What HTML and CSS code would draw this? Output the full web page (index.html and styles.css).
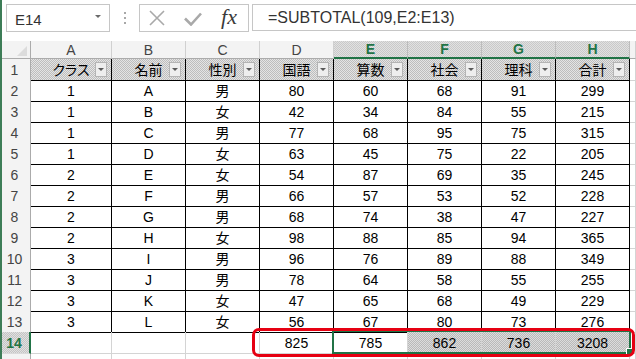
FILE: index.html
```html
<!DOCTYPE html>
<html lang="ja">
<head>
<meta charset="utf-8">
<title>SUBTOTAL</title>
<link rel="stylesheet" href="styles.css">
</head>
<body>
<div class="app">
  <div class="fbar">
    <div class="namebox"><span class="nb-text">E14</span><span class="nb-arrow"></span></div>
    <div class="sep"><i></i><i></i><i></i></div>
    <div class="btns">
      <span class="btn b-x"><svg width="16" height="16" viewBox="0 0 16 16"><path d="M1 1L15 15M15 1L1 15" stroke="#a9a9a9" stroke-width="1.6" fill="none"/></svg></span>
      <span class="btn b-ok"><svg width="18" height="14" viewBox="0 0 18 14"><path d="M1 6.5L7 12.5L17 1.5" stroke="#a9a9a9" stroke-width="2.6" fill="none"/></svg></span>
      <span class="btn b-fx">fx</span>
    </div>
    <div class="formula">=SUBTOTAL(109,E2:E13)</div>
  </div>

  <div class="sheet">
    <div class="row hdr">
      <div class="c corner"><svg width="10" height="10" viewBox="0 0 10 10"><path d="M10 0L10 10L0 10Z" fill="#dcdcdc"/></svg></div>
      <div class="c">A</div><div class="c">B</div><div class="c">C</div><div class="c">D</div>
      <div class="c sel">E</div><div class="c sel">F</div><div class="c sel">G</div><div class="c sel">H</div>
      <div class="c"></div>
    </div>

    <div class="row r1">
      <div class="c rh">1</div>
      <div class="c t f">クラス<span class="fb"></span></div>
      <div class="c t f">名前<span class="fb"></span></div>
      <div class="c t f">性別<span class="fb"></span></div>
      <div class="c t f">国語<span class="fb"></span></div>
      <div class="c t f">算数<span class="fb"></span></div>
      <div class="c t f">社会<span class="fb"></span></div>
      <div class="c t f">理科<span class="fb"></span></div>
      <div class="c t f">合計<span class="fb"></span></div>
      <div class="c"></div>
    </div>

    <div class="row"><div class="c rh">2</div><div class="c t">1</div><div class="c t">A</div><div class="c t">男</div><div class="c t">80</div><div class="c t">60</div><div class="c t">68</div><div class="c t">91</div><div class="c t">299</div><div class="c"></div></div>
    <div class="row"><div class="c rh">3</div><div class="c t">1</div><div class="c t">B</div><div class="c t">女</div><div class="c t">42</div><div class="c t">34</div><div class="c t">84</div><div class="c t">55</div><div class="c t">215</div><div class="c"></div></div>
    <div class="row"><div class="c rh">4</div><div class="c t">1</div><div class="c t">C</div><div class="c t">男</div><div class="c t">77</div><div class="c t">68</div><div class="c t">95</div><div class="c t">75</div><div class="c t">315</div><div class="c"></div></div>
    <div class="row"><div class="c rh">5</div><div class="c t">1</div><div class="c t">D</div><div class="c t">女</div><div class="c t">63</div><div class="c t">45</div><div class="c t">75</div><div class="c t">22</div><div class="c t">205</div><div class="c"></div></div>
    <div class="row"><div class="c rh">6</div><div class="c t">2</div><div class="c t">E</div><div class="c t">女</div><div class="c t">54</div><div class="c t">87</div><div class="c t">69</div><div class="c t">35</div><div class="c t">245</div><div class="c"></div></div>
    <div class="row"><div class="c rh">7</div><div class="c t">2</div><div class="c t">F</div><div class="c t">男</div><div class="c t">66</div><div class="c t">57</div><div class="c t">53</div><div class="c t">52</div><div class="c t">228</div><div class="c"></div></div>
    <div class="row"><div class="c rh">8</div><div class="c t">2</div><div class="c t">G</div><div class="c t">男</div><div class="c t">68</div><div class="c t">74</div><div class="c t">38</div><div class="c t">47</div><div class="c t">227</div><div class="c"></div></div>
    <div class="row"><div class="c rh">9</div><div class="c t">2</div><div class="c t">H</div><div class="c t">女</div><div class="c t">98</div><div class="c t">88</div><div class="c t">85</div><div class="c t">94</div><div class="c t">365</div><div class="c"></div></div>
    <div class="row"><div class="c rh">10</div><div class="c t">3</div><div class="c t">I</div><div class="c t">男</div><div class="c t">96</div><div class="c t">76</div><div class="c t">89</div><div class="c t">88</div><div class="c t">349</div><div class="c"></div></div>
    <div class="row"><div class="c rh">11</div><div class="c t">3</div><div class="c t">J</div><div class="c t">男</div><div class="c t">78</div><div class="c t">64</div><div class="c t">58</div><div class="c t">55</div><div class="c t">255</div><div class="c"></div></div>
    <div class="row"><div class="c rh">12</div><div class="c t">3</div><div class="c t">K</div><div class="c t">女</div><div class="c t">47</div><div class="c t">65</div><div class="c t">68</div><div class="c t">49</div><div class="c t">229</div><div class="c"></div></div>
    <div class="row"><div class="c rh">13</div><div class="c t">3</div><div class="c t">L</div><div class="c t">女</div><div class="c t">56</div><div class="c t">67</div><div class="c t">80</div><div class="c t">73</div><div class="c t">276</div><div class="c"></div></div>

    <div class="row r14">
      <div class="c rh on">14</div>
      <div class="c"></div><div class="c"></div><div class="c"></div>
      <div class="c">825</div>
      <div class="c">785</div>
      <div class="c hl">862</div>
      <div class="c hl">736</div>
      <div class="c hl">3208</div>
      <div class="c"></div>
      <div class="selbox"></div>
      <div class="handle"></div>
      <div class="mark"></div>
    </div>

    <div class="row"><div class="c rh"></div><div class="c"></div><div class="c"></div><div class="c"></div><div class="c"></div><div class="c"></div><div class="c"></div><div class="c"></div><div class="c"></div><div class="c"></div></div>
  </div>
</div>
</body>
</html>
```

FILE: styles.css
```css
html, body {
  margin: 0;
  padding: 0;
  background: #ffffff;
}
body {
  width: 636px;
  height: 359px;
  overflow: hidden;
  font-family: "Liberation Sans", "Noto Sans CJK JP", sans-serif;
  font-size: 14px;
  color: #000;
}
.app {
  height: 359px;
  border-left: 2px solid #3d7d57;
  overflow: hidden;
}

/* formula bar */
.fbar {
  height: 41px;
  box-sizing: border-box;
  padding: 4px 0 0 4px;
  display: flex;
  align-items: flex-start;
  background: #fff;
}
.namebox {
  width: 104px;
  height: 28px;
  box-sizing: border-box;
  border: 1px solid #c6c6c6;
  display: flex;
  align-items: center;
  justify-content: space-between;
  padding: 3px 8px 0 8px;
  color: #333;
  font-size: 15px;
}
.nb-arrow {
  width: 0;
  height: 0;
  border-left: 3px solid transparent;
  border-right: 3px solid transparent;
  border-top: 3px solid #6a6a6a;
  margin-top: -6px;
}
.sep {
  width: 29px;
  height: 28px;
  display: flex;
  flex-direction: column;
  align-items: center;
  justify-content: center;
  gap: 3px;
  padding-left: 1px;
  box-sizing: border-box;
}
.sep i {
  display: block;
  width: 2px;
  height: 2px;
  background: #a8a8a8;
}
.btns {
  width: 110px;
  height: 28px;
  box-sizing: border-box;
  border: 1px solid #c6c6c6;
  display: flex;
  align-items: center;
}
.btn {
  display: flex;
  align-items: center;
  justify-content: center;
  height: 26px;
}
.b-x { width: 34px; }
.b-ok { width: 38px; padding-top: 1px; }
.b-fx {
  width: 34px;
  font-family: "Liberation Serif", serif;
  font-style: italic;
  font-size: 22px;
  color: #3a3a3a;
  padding-bottom: 2px;
  box-sizing: border-box;
}
.formula {
  flex: 1;
  height: 27px;
  margin-left: 3px;
  box-sizing: border-box;
  border: 1px solid #c6c6c6;
  border-right: none;
  display: flex;
  align-items: center;
  padding-left: 15px;
  font-size: 16px;
  color: #333;
}

/* sheet */
.row {
  display: grid;
  grid-template-columns: 29px 81px repeat(7, 74px) 1fr;
  height: 21px;
}
.c {
  box-sizing: border-box;
  border-right: 1px solid #d4d4d4;
  border-bottom: 1px solid #d4d4d4;
  display: flex;
  align-items: center;
  justify-content: center;
  line-height: 19px;
  padding-top: 2px;
  white-space: nowrap;
}
.hdr {
  height: 18px;
}
.hdr .c {
  background: #f3f3f3;
  border-bottom-color: #ababab;
  border-right-color: #d0d0d0;
  color: #444;
  line-height: 16px;
  padding-top: 0;
}
.hdr .corner {
  border-right-color: #ababab;
  justify-content: flex-end;
  align-items: flex-end;
  padding: 0 3px 2px 0;
}
.hdr .sel {
  background: repeating-conic-gradient(#c9c9c9 0 25%, #e1e1e1 0 50%) 0 0 / 2px 2px;
  border-bottom: 2px solid #217346;
  border-right-color: #bdbdbd;
  color: #217346;
  font-weight: bold;
}
.rh {
  background: #f3f3f3;
  border-right-color: #ababab;
  border-bottom-color: #dadada;
  color: #444;
  padding-right: 3px;
}
.rh.on {
  background: repeating-conic-gradient(#c4c4c4 0 25%, #e0e0e0 0 50%) 0 0 / 2px 2px;
  border-right: 2px solid #217346;
  color: #217346;
  font-weight: bold;
}
.t {
  border-right-color: #000;
  border-bottom-color: #000;
}
.r1 .f {
  position: relative;
  background: repeating-conic-gradient(#bdbdbd 0 25%, #e4e4e4 0 50%) 0 0 / 2px 2px;
  font-feature-settings: "palt";
}
.fb {
  position: absolute;
  right: 4px;
  top: 3px;
  width: 12px;
  height: 15px;
  box-sizing: border-box;
  border: 1px solid #b4b4b4;
  background: #eeeeee;
  display: flex;
  align-items: center;
  justify-content: center;
}
.fb::after {
  content: "";
  width: 0;
  height: 0;
  border-left: 3px solid transparent;
  border-right: 3px solid transparent;
  border-top: 3px solid #5a5a5a;
}
.r14 {
  position: relative;
}
.r14 .hl {
  background: repeating-conic-gradient(#b9b9b9 0 25%, #dcdcdc 0 50%) 0 0 / 2px 2px;
}
.selbox {
  position: absolute;
  left: 330px;
  top: -2px;
  width: 299px;
  height: 24px;
  box-sizing: border-box;
  border: 2px solid #217346;
}
.handle {
  position: absolute;
  left: 624px;
  top: 16px;
  width: 7px;
  height: 7px;
  box-sizing: border-box;
  border: 1px solid #fff;
  background: #217346;
}
.mark {
  position: absolute;
  left: 250px;
  top: -4px;
  width: 383px;
  height: 29px;
  box-sizing: border-box;
  border: 3px solid #e60012;
  border-radius: 7px;
}
```
